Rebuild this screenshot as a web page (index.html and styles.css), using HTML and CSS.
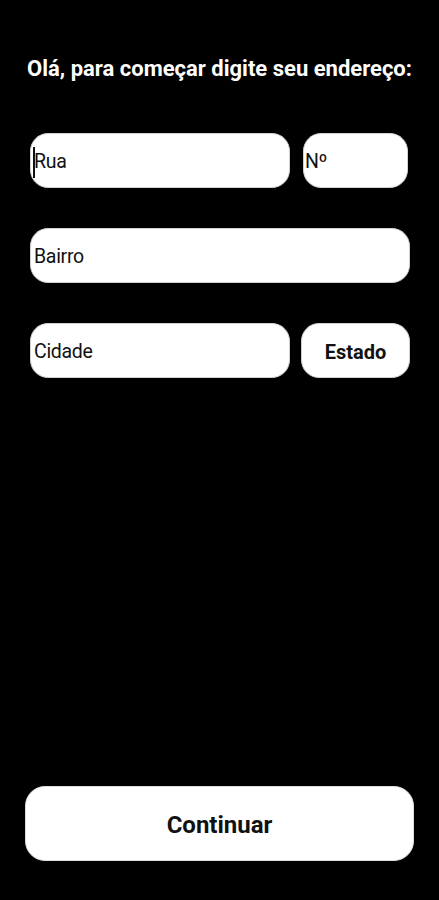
FILE: index.html
```html
<!DOCTYPE html>
<html lang="pt-BR">
<head>
<meta charset="utf-8">
<title>Endereço</title>
<link rel="stylesheet" href="styles.css">
</head>
<body>
<main class="screen">
  <h1 class="title">Olá, para começar digite seu endereço:</h1>
  <form class="form">
    <div class="row row-first">
      <div class="field field-grow"><span class="caret"></span><span class="ph">Rua</span></div>
      <div class="field field-num"><span class="ph">Nº</span></div>
    </div>
    <div class="row">
      <div class="field field-grow"><span class="ph">Bairro</span></div>
    </div>
    <div class="row row-last">
      <div class="field field-grow"><span class="ph">Cidade</span></div>
      <div class="field field-state"><span class="state">Estado</span></div>
    </div>
  </form>
  <button class="continue" type="button">Continuar</button>
</main>
</body>
</html>
```

FILE: styles.css
```css
html, body {
  margin: 0;
  padding: 0;
  background: #000;
}
.screen {
  min-height: 900px;
  box-sizing: border-box;
  display: flex;
  flex-direction: column;
  font-family: Roboto, "Liberation Sans", sans-serif;
  padding: 57px 0 39px;
}
.title {
  margin: 0;
  color: #fff;
  font-size: 22px;
  font-weight: 700;
  line-height: 24px;
  text-align: center;
  letter-spacing: 0;
}
.form {
  display: flex;
  flex-direction: column;
  gap: 40px;
  padding: 0 29px 0 30px;
  margin-top: 52px;
}
.row {
  display: flex;
  gap: 13px;
}
.row-first {
  margin-right: 2px;
}
.row-last {
  gap: 11px;
}
.field {
  position: relative;
  height: 55px;
  box-sizing: border-box;
  background: #fff;
  border: 1px solid #d0d0d0;
  border-radius: 18px;
  display: flex;
  align-items: center;
  padding-left: 3px;
}
.field-grow {
  flex: 1;
}
.field-num {
  width: 105px;
  padding-left: 1px;
}
.field-state {
  width: 109px;
  justify-content: center;
  padding-left: 0;
}
.ph {
  color: #111;
  font-size: 19.5px;
  letter-spacing: -0.3px;
  padding-top: 1px;
}
.state {
  color: #111;
  font-size: 20px;
  font-weight: 700;
  padding-top: 3px;
}
.caret {
  position: absolute;
  left: 2px;
  top: 13px;
  width: 2px;
  height: 31px;
  background: #111;
}
.continue {
  margin: auto 25px 0;
  height: 75px;
  background: #fff;
  border: 1px solid #ddd;
  border-radius: 20px;
  font-family: Roboto, "Liberation Sans", sans-serif;
  font-size: 24px;
  font-weight: 700;
  color: #111;
  padding: 2px 0 0;
}
```
